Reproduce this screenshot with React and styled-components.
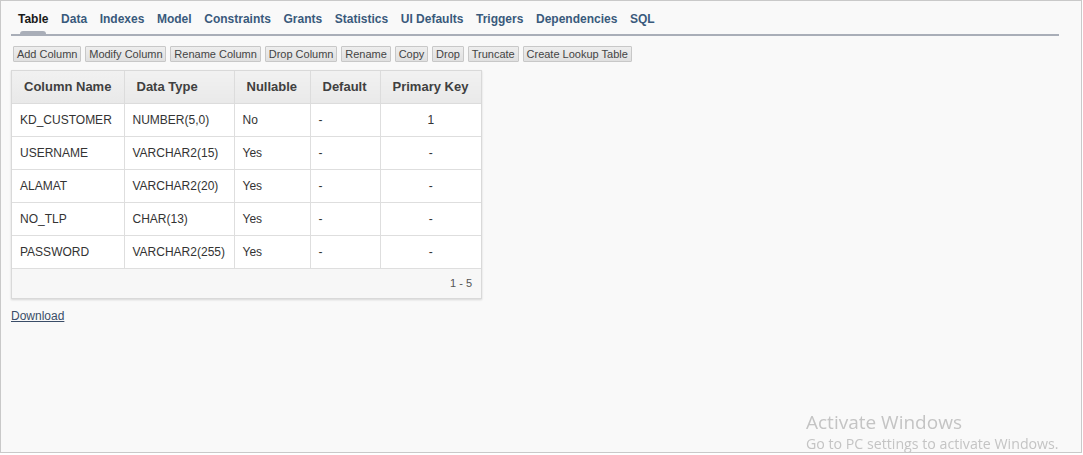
import React from "react";
import styled, { createGlobalStyle } from "styled-components";

const GlobalStyle = createGlobalStyle`
  html, body { margin: 0; padding: 0; background: #ffffff; }
  body { font-family: "Liberation Sans", Arial, sans-serif; }
  * { box-sizing: border-box; }
`;

const Frame = styled.div`
  width: 1082px;
  height: 453px;
  border: 1px solid #c9c9c9;
  background: #f9f9f9;
  padding: 0 10px;
  display: flex;
  flex-direction: column;
  align-items: flex-start;
`;

const TabBar = styled.nav`
  display: flex;
  margin-top: 11px;
  width: 1048px;
  border-bottom: 2px solid #a9aeb8;
`;

const Tab = styled.a`
  position: relative;
  display: block;
  padding: 0 6.3px 8px;
  font-size: 12px;
  line-height: 14px;
  font-weight: bold;
  color: ${(p) => (p.$active ? "#1a1a1a" : "#395a7c")};
  text-decoration: none;
  cursor: pointer;
  &:first-child { padding-left: 7px; }
  &::after {
    content: "";
    display: ${(p) => (p.$active ? "block" : "none")};
    position: absolute;
    left: 50%;
    bottom: 0;
    width: 26px;
    height: 3px;
    margin-left: -13px;
    border-radius: 3px 3px 0 0;
    background: #a9aeb8;
  }
`;

const ButtonRow = styled.div`
  display: flex;
  gap: 4px;
  margin: 10px 0 0 2px;
`;

const Button = styled.button`
  font-family: "Liberation Sans", Arial, sans-serif;
  font-size: 11px;
  line-height: 14px;
  height: 16px;
  padding: 0 2.9px;
  color: #444444;
  border: 1px solid #c8c8c8;
  border-radius: 1px;
  background: linear-gradient(#eeeeee, #e0e0e0);
  cursor: pointer;
`;

const TableBox = styled.div`
  margin-top: 8px;
  width: 471px;
  border: 1px solid #d9d9d9;
  background: #ffffff;
  box-shadow: 0 1px 2px rgba(0, 0, 0, 0.14);
`;

const Table = styled.table`
  width: 469px;
  border-collapse: collapse;
  table-layout: fixed;
`;

const HeadCell = styled.th`
  height: 32px;
  padding: 0 0 0 12px;
  text-align: left;
  font-size: 13px;
  font-weight: bold;
  color: #404040;
  background: linear-gradient(#f1f1f1, #e9e9e9);
  border-right: 1px solid #dcdcdc;
  border-bottom: 1px solid #dcdcdc;
  &:last-child { border-right: none; }
`;

const Cell = styled.td`
  height: 33px;
  padding: 0 0 0 8px;
  text-align: ${(p) => (p.$center ? "center" : "left")};
  ${(p) => (p.$center ? "padding: 0;" : "")}
  font-size: 12px;
  color: #333333;
  border-right: 1px solid #dedede;
  border-bottom: 1px solid #dedede;
  &:last-child { border-right: none; }
`;

const Footer = styled.div`
  height: 29px;
  display: flex;
  align-items: center;
  justify-content: flex-end;
  padding-right: 9px;
  font-size: 11px;
  color: #555555;
  background: #f7f7f7;
`;

const DownloadLink = styled.a`
  margin-top: 10px;
  font-size: 12px;
  line-height: 14px;
  color: #3a4d68;
  text-decoration: underline;
  cursor: pointer;
`;

const Watermark = styled.div`
  position: fixed;
  left: 806px;
  top: 409px;
  font-family: "Open Sans", "Noto Sans", sans-serif;
  color: #c4c4c4;
  pointer-events: none;
`;

const WatermarkTitle = styled.div`
  font-size: 19px;
  line-height: 26px;
`;

const WatermarkSub = styled.div`
  font-size: 14.2px;
  line-height: 18px;
`;

const tabs = [
  "Table", "Data", "Indexes", "Model", "Constraints", "Grants",
  "Statistics", "UI Defaults", "Triggers", "Dependencies", "SQL",
];

const buttons = [
  "Add Column", "Modify Column", "Rename Column", "Drop Column",
  "Rename", "Copy", "Drop", "Truncate", "Create Lookup Table",
];

const columns = [
  { name: "Column Name", width: 112 },
  { name: "Data Type", width: 110 },
  { name: "Nullable", width: 76 },
  { name: "Default", width: 70 },
  { name: "Primary Key", width: 101 },
];

const rows = [
  ["KD_CUSTOMER", "NUMBER(5,0)", "No", "-", "1"],
  ["USERNAME", "VARCHAR2(15)", "Yes", "-", "-"],
  ["ALAMAT", "VARCHAR2(20)", "Yes", "-", "-"],
  ["NO_TLP", "CHAR(13)", "Yes", "-", "-"],
  ["PASSWORD", "VARCHAR2(255)", "Yes", "-", "-"],
];

export default function App() {
  return (
    <>
      <GlobalStyle />
      <Frame>
        <TabBar>
          {tabs.map((t, i) => (
            <Tab key={t} $active={i === 0}>{t}</Tab>
          ))}
        </TabBar>
        <ButtonRow>
          {buttons.map((b) => (
            <Button key={b} type="button">{b}</Button>
          ))}
        </ButtonRow>
        <TableBox>
          <Table>
            <colgroup>
              {columns.map((c) => (
                <col key={c.name} style={{ width: c.width }} />
              ))}
            </colgroup>
            <thead>
              <tr>
                {columns.map((c) => (
                  <HeadCell key={c.name}>{c.name}</HeadCell>
                ))}
              </tr>
            </thead>
            <tbody>
              {rows.map((r) => (
                <tr key={r[0]}>
                  {r.map((v, j) => (
                    <Cell key={j} $center={j === 4}>{v}</Cell>
                  ))}
                </tr>
              ))}
            </tbody>
          </Table>
          <Footer>1 - 5</Footer>
        </TableBox>
        <DownloadLink>Download</DownloadLink>
      </Frame>
      <Watermark>
        <WatermarkTitle>Activate Windows</WatermarkTitle>
        <WatermarkSub>Go to PC settings to activate Windows.</WatermarkSub>
      </Watermark>
    </>
  );
}
